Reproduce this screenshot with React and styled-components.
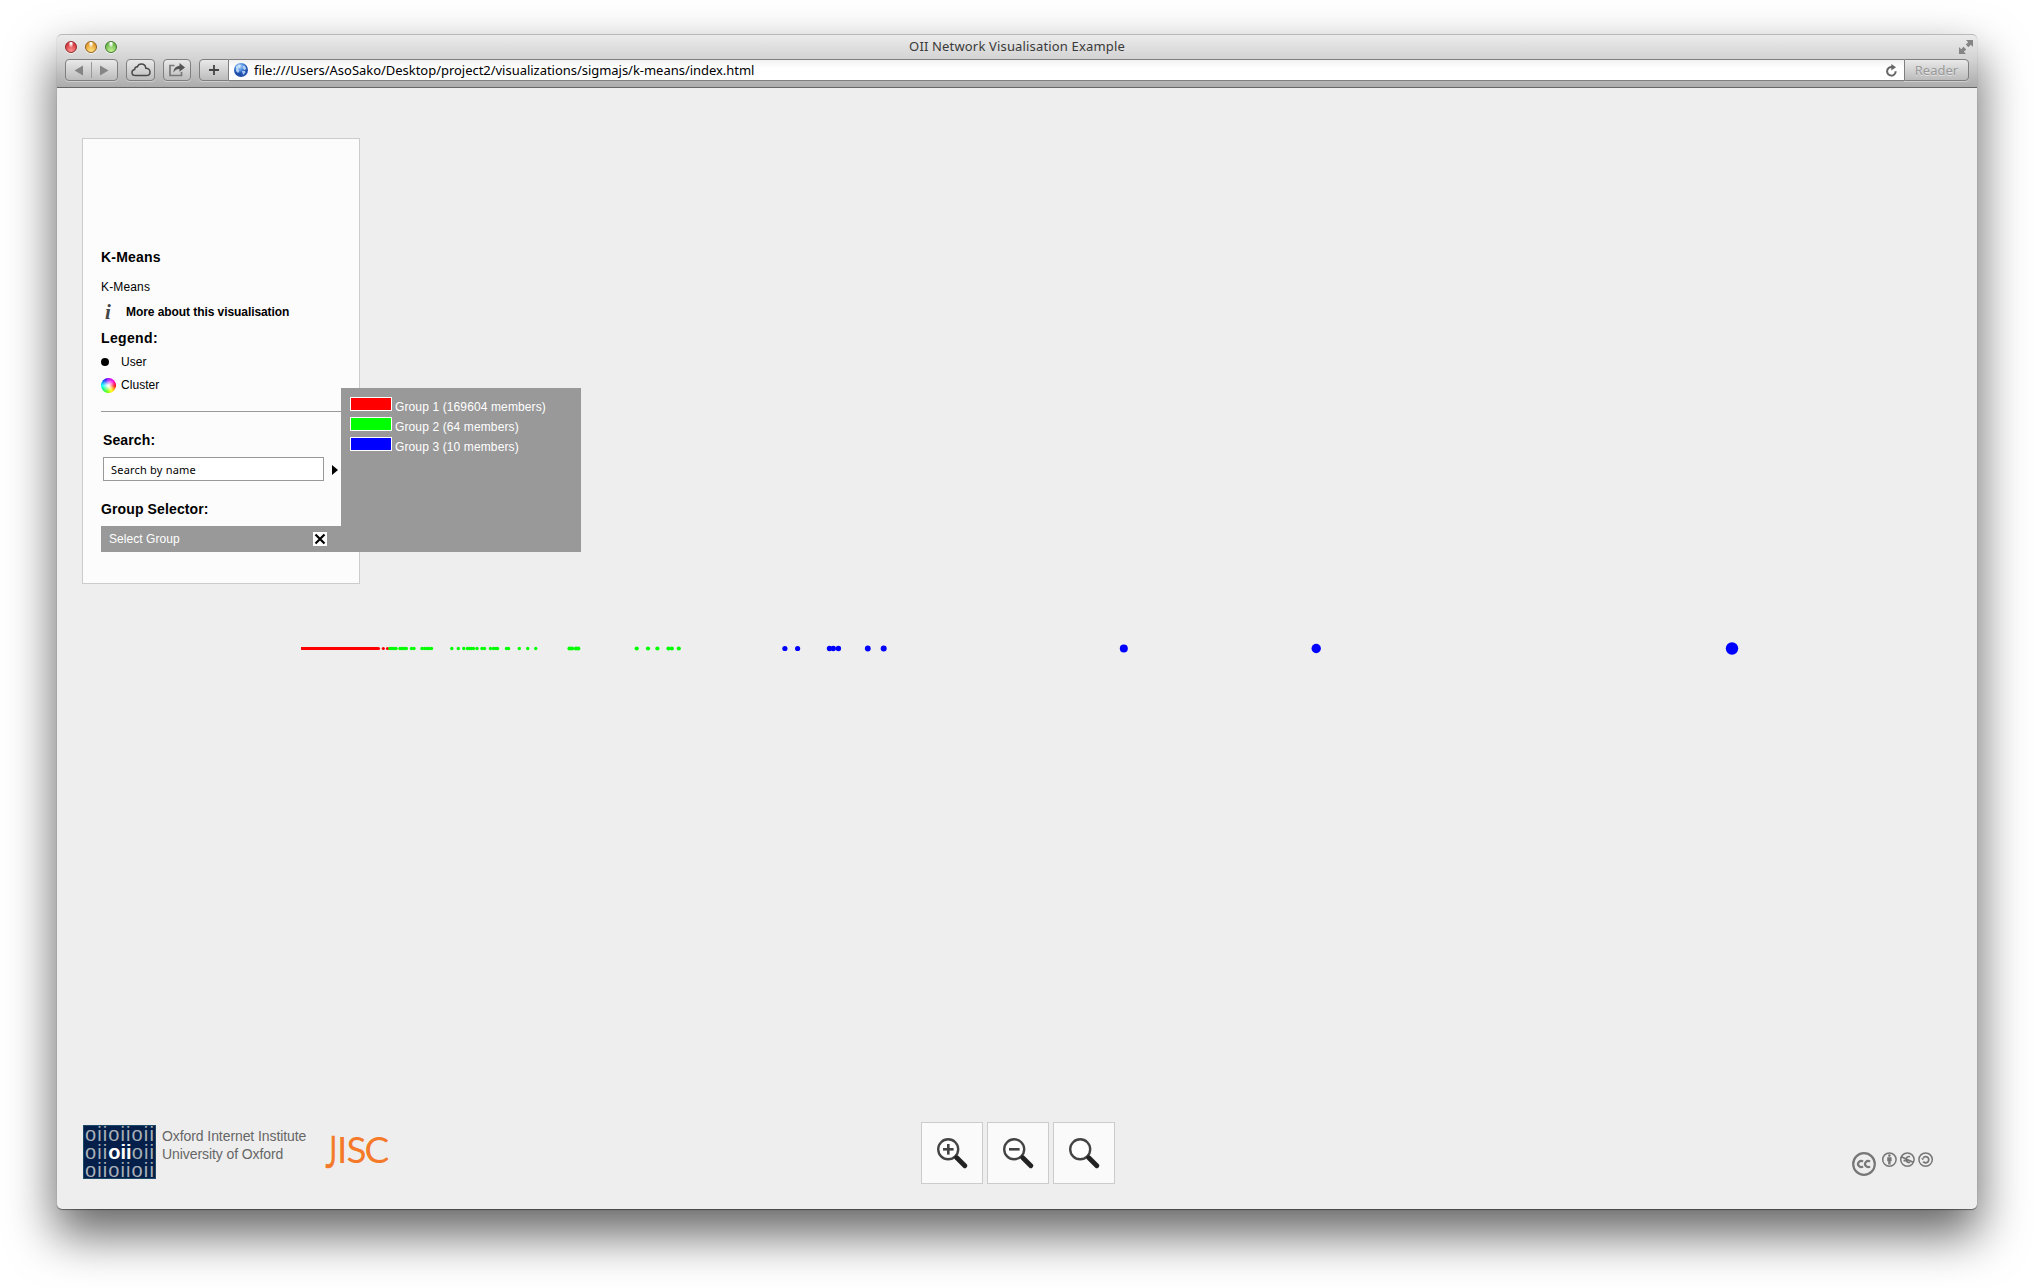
import React from "react";
import styled, { createGlobalStyle, css } from "styled-components";

const Global = createGlobalStyle`
  * { box-sizing: border-box; }
  body { margin: 0; background: #fff; overflow: hidden; }
`;
const sans = `"Liberation Sans", Arial, sans-serif`;
const humanist = `"Noto Sans", "Open Sans", sans-serif`;

const Desktop = styled.div`
  width: 2034px;
  height: 1288px;
  padding: 34px 57px 79px;
  overflow: hidden;
  background: #fff;
`;
const Window = styled.div`
  height: 1175px;
  display: flex;
  flex-direction: column;
  border-radius: 5px;
  background: #eee;
  box-shadow: 0 1px 1px 0 rgba(0, 0, 0, 0.45), 0 24px 48px 2px rgba(0, 0, 0, 0.6);
`;
const Chrome = styled.header`
  height: 54px;
  flex: none;
  display: flex;
  flex-direction: column;
  padding: 0 8px;
  border-radius: 5px 5px 0 0;
  border-top: 1px solid #b8b8b8;
  border-bottom: 1px solid #666;
  background: linear-gradient(#ebebeb, #d2d2d2 48%, #acacac);
`;
const TitleBar = styled.div`
  height: 24px;
  display: grid;
  grid-template-columns: 1fr auto 1fr;
  align-items: center;
  padding-bottom: 1px;
`;
const Lights = styled.div`
  display: flex;
  gap: 8px;
`;
const Light = styled.span`
  width: 12px;
  height: 12px;
  border-radius: 50%;
  border: 1px solid ${(p) => p.$edge};
  background: radial-gradient(ellipse at 50% 12%, #fff 0 8%, transparent 38%),
    radial-gradient(circle at 50% 95%, ${(p) => p.$glow}, ${(p) => p.$color} 75%);
  box-shadow: 0 1px 0 rgba(255, 255, 255, 0.6);
`;
const Title = styled.div`
  font: 13px/22px ${humanist};
  letter-spacing: 0.16px;
  padding-bottom: 1px;
  color: #3a3a3a;
  white-space: nowrap;
`;
const Expand = styled.svg`
  justify-self: end;
  width: 14px;
  height: 14px;
  margin-right: -4px;
`;
const Toolbar = styled.div`
  display: flex;
  height: 22px;
`;
const buttonFace = css`
  border: 1px solid #7f7f7f;
  background: linear-gradient(#e9e9e9, #bcbcbc);
  box-shadow: 0 1px 0 rgba(255, 255, 255, 0.35);
`;
const ToolButton = styled.button`
  ${buttonFace}
  width: ${(p) => p.$w}px;
  height: 22px;
  margin: 0 ${(p) => p.$gap || 0}px 0 0;
  padding: 0;
  display: flex;
  align-items: center;
  justify-content: center;
  border-radius: ${(p) => p.$radius || "4px"};
  font: 13px ${humanist};
  letter-spacing: 0px;
  color: #999;
  text-shadow: 0 1px 0 rgba(255, 255, 255, 0.5);
`;
const Address = styled.div`
  flex: 1;
  height: 22px;
  display: flex;
  align-items: center;
  padding: 0 7px 0 5px;
  border: solid #7f7f7f;
  border-width: 1px 0;
  background: linear-gradient(#f1f1f1, #fff 40%);
`;
const Url = styled.span`
  flex: 1;
  padding-left: 6px;
  font: 13px/20px ${humanist};
  letter-spacing: -0.03px;
  color: #000;
`;

const Stage = styled.main`
  position: relative;
  flex: 1;
  display: flex;
  flex-direction: column;
  justify-content: space-between;
  padding: 50px 43px 25px 25px;
`;
const Plot = styled.svg`
  position: absolute;
  left: 0;
  top: 0;
  width: 1920px;
  height: 1121px;
`;
const Panel = styled.section`
  position: relative;
  width: 278px;
  height: 446px;
  padding: 108px 18px 0;
  border: 1px solid #ccc;
  background: #fcfcfc;
  font-family: ${sans};
  color: #000;
`;
const Heading = styled.h2`
  margin: ${(p) => p.$mt || 0}px 0 0;
  padding: 0 0 0 ${(p) => p.$indent || 0}px;
  height: ${(p) => p.$h}px;
  font: bold 14px/20px ${sans};
  letter-spacing: ${(p) => p.$ls || 0.2}px;
`;
const Row = styled.div`
  display: flex;
  align-items: center;
  height: ${(p) => p.$h}px;
  font-size: 12px;
  font-weight: ${(p) => (p.$bold ? "bold" : "normal")};
  letter-spacing: ${(p) => p.$ls || 0.05}px;
`;
const IconSlot = styled.span`
  width: ${(p) => p.$w}px;
  display: flex;
`;
const InfoGlyph = styled.span`
  padding-left: 4px;
  font: italic bold 21px/20px "Liberation Serif", serif;
  color: #444;
`;
const UserDot = styled.span`
  width: 8px;
  height: 8px;
  border-radius: 50%;
  background: #000;
`;
const ClusterDot = styled.span`
  width: 15px;
  height: 15px;
  border-radius: 50%;
  background: radial-gradient(circle, #fff 5%, rgba(255, 255, 255, 0) 65%),
    conic-gradient(#a0f, #f0c 50deg, #f00 95deg, #fa0 125deg, #ff0 155deg, #5f0 195deg, #0f8 235deg, #0ff 270deg, #06f 310deg, #30f 335deg, #a0f);
`;
const Rule = styled.hr`
  width: 240px;
  height: 1px;
  margin: 0;
  border: 0;
  background: #999;
`;
const SearchRow = styled.div`
  display: flex;
  align-items: center;
  height: 24px;
  padding-left: 2px;
`;
const SearchField = styled.div`
  width: 221px;
  height: 24px;
  padding-left: 7px;
  border: 1px solid #999;
  background: #fff;
  font: 11px/23px ${humanist};
  letter-spacing: 0.2px;
`;
const Arrow = styled.span`
  margin: 2px 0 0 8px;
  border-left: 6px solid #000;
  border-top: 5.5px solid transparent;
  border-bottom: 5.5px solid transparent;
`;
const SelectBar = styled.div`
  width: 240px;
  height: 26px;
  display: flex;
  align-items: center;
  justify-content: space-between;
  padding: 0 14px 0 8px;
  background: #999;
  color: #fff;
  font-size: 12px;
  letter-spacing: 0.05px;
`;
const Close = styled.svg`
  width: 14px;
  height: 14px;
  background: #fff;
`;
const GroupMenu = styled.ul`
  position: absolute;
  left: 258px;
  top: 249px;
  width: 240px;
  height: 164px;
  margin: 0;
  padding: 9px;
  list-style: none;
  background: #999;
`;
const GroupItem = styled.li`
  display: flex;
  height: 20px;
  gap: 3px;
  color: #fff;
  font: 12px/21px ${sans};
  letter-spacing: 0.12px;
`;
const Swatch = styled.span`
  width: 42px;
  height: 14px;
  border: 1px solid #fff;
  background: ${(p) => p.$color};
`;

const Footer = styled.footer`
  position: relative;
  display: grid;
  grid-template-columns: 839px 1fr auto;
  height: 62px;
`;
const Logos = styled.div`
  display: flex;
  padding: 3px 0 0 1px;
`;
const OiiMark = styled.div`
  width: 73px;
  height: 54px;
  box-shadow: inset 0 0 0 1px #1c4a66;
  background: #04204a;
  font: 20px/18px ${sans};
  letter-spacing: 1.1px;
  color: #aab0b8;
  padding-left: 2px;
  b { color: #fff; font-weight: bold; letter-spacing: 0; }
`;
const MarkLine = styled.div`
  height: 18px;
  white-space: nowrap;
`;
const Institute = styled.div`
  width: 164px;
  padding: 2px 0 0 6px;
  font: 14px/18px ${sans};
  letter-spacing: -0.08px;
  color: #666;
`;
const Jisc = styled.svg`
  width: 70px;
  height: 50px;
`;
const ZoomTools = styled.div`
  display: flex;
  gap: 4px;
`;
const ZoomButton = styled.button`
  width: 62px;
  height: 62px;
  padding: 0;
  display: flex;
  align-items: center;
  justify-content: center;
  border: 1px solid #ccc;
  background: #fafafa;
`;
const License = styled.svg`
  width: 84px;
  height: 30px;
  margin-top: 30px;
`;

const range = (from, to, step) => {
  const out = [];
  for (let x = from; x <= to; x += step) out.push(x);
  return out;
};
const GREEN = [
  ...range(390, 396, 2), ...range(400, 406.5, 2.1), 411.5, 414, 422, 424.5, 427, 429, 431.5, 451.8, 458.3,
  463.8, 467.5, 469.5, 471.5, 473.5, 477, 482, 484.5, 490.5, 493.5, 496, 497.5, 506.5, 508.5, 519.3, 527.7, 535.7,
];
const GREEN_LARGE = [569.5, 572, 576, 578.3, 636.7, 648, 657.4, 668.5, 671.8, 678.8];
const BLUE = [
  [784.9, 2.6], [797.6, 2.6], [829.5, 2.7], [833.3, 2.7], [838.4, 2.7], [867.8, 2.9], [883.7, 3],
  [1123.8, 4], [1316.2, 4.7], [1732, 6.2],
];
const GROUPS = [
  ["#f00", "Group 1 (169604 members)"],
  ["#0f0", "Group 2 (64 members)"],
  ["#00f", "Group 3 (10 members)"],
];

function Points() {
  return (
    <Plot viewBox="57 88 1920 1121">
      <rect x="301" y="647" width="77" height="3" fill="#f00" />
      {[378.5, 383.3, 387.5].map((x) => <circle key={x} cx={x} cy="648.5" r="1.6" fill="#f00" />)}
      {GREEN.map((x) => <circle key={x} cx={x} cy="648.5" r="1.7" fill="#0f0" />)}
      {GREEN_LARGE.map((x) => <circle key={x} cx={x} cy="648.5" r="2.1" fill="#0f0" />)}
      {BLUE.map(([x, r]) => <circle key={x} cx={x} cy="648.5" r={r} fill="#00f" />)}
    </Plot>
  );
}

function Magnifier({ sign }) {
  return (
    <svg width="32" height="32" viewBox="0 0 32 32">
      <circle cx="12.2" cy="12.3" r="10" fill="#fff" stroke="#444" strokeWidth="2.4" />
      <path d="M19.3 19.2l2.2 2.2" stroke="#333" strokeWidth="3" />
      <path d="M20.8 20.8l8 8" stroke="#222" strokeWidth="4.8" strokeLinecap="round" />
      {sign && <path d="M7 12.3h10.6" stroke="#444" strokeWidth="2.6" />}
      {sign === "plus" && <path d="M12.3 7v10.6" stroke="#444" strokeWidth="2.6" />}
    </svg>
  );
}

function BrowserChrome() {
  return (
    <Chrome>
      <TitleBar>
        <Lights>
          <Light $edge="#8f2a2c" $color="#d8343a" $glow="#ff9a96" />
          <Light $edge="#95601c" $color="#e39a2c" $glow="#ffe888" />
          <Light $edge="#417a2c" $color="#6cb84a" $glow="#c8f79c" />
        </Lights>
        <Title>OII Network Visualisation Example</Title>
        <Expand viewBox="0 0 14 14">
          <path d="M7 0h7v7l-2.2-2.2L9.400 7.200 6.800 4.600 9.200 2.200zM0 7l2.200 2.200L4.600 6.800 7.200 9.400 4.800 11.800 7 14H0z" fill="#858585" />
        </Expand>
      </TitleBar>
      <Toolbar>
        <ToolButton $w={53} $gap={8}>
          <svg width="51" height="20" viewBox="0 0 51 20">
            <path d="M17 5.500v10L8.500 10.500zM34 5.500v10l8.500-5z" fill="#858585" />
            <path d="M25.500 2v16" stroke="#999" />
          </svg>
        </ToolButton>
        <ToolButton $w={29} $gap={8}>
          <svg width="20" height="14" viewBox="0 0 20 14">
            <path d="M4.500 12.500C2.300 12.500 1 11.200 1 9.400c0-1.700 1.200-2.800 2.700-3C3.800 4.600 4.900 3.700 6.300 3.900 7 2.100 8.400 1 10.300 1c2.500 0 4.300 1.800 4.500 4.300 2.500-.1 4.200 1.500 4.200 3.600 0 2.200-1.500 3.600-3.700 3.600z" fill="none" stroke="#4a4a4a" strokeWidth="1.500" />
          </svg>
        </ToolButton>
        <ToolButton $w={28} $gap={8}>
          <svg width="18" height="14" viewBox="0 0 18 14">
            <path d="M6.500 2.500H2v10h11.500V9" fill="none" stroke="#777" strokeWidth="1.700" />
            <path d="M11.500 0l5.500 4.400-5.500 4.400V6C8.800 6 6.900 7 5.500 9.500 5.700 5.500 7.800 3 11.500 2.700z" fill="#555" />
          </svg>
        </ToolButton>
        <ToolButton $w={30} $radius="4px 0 0 4px">
          <svg width="10" height="10" viewBox="0 0 10 10">
            <path d="M5 0v10M0 5h10" stroke="#444" strokeWidth="1.800" />
          </svg>
        </ToolButton>
        <Address>
          <svg width="14" height="14" viewBox="0 0 14 14">
            <defs>
              <radialGradient id="globe" cx=".4" cy=".25">
                <stop offset="0" stopColor="#b8d8fa" />
                <stop offset=".6" stopColor="#4a88dc" />
                <stop offset="1" stopColor="#2050ac" />
              </radialGradient>
            </defs>
            <circle cx="7" cy="7" r="7" fill="url(#globe)" />
            <path d="M2 3.500l3-2 2 .7-1 2-2 1.500 1.500 2L4 10 2 8zM8.500 2.500l2.500.5 1.500 3-2 1-1.500-1.500zM8 8l3-.3.500 1.800L9 12z" fill="#d6ecff" opacity=".75" />
          </svg>
          <Url>file:///Users/AsoSako/Desktop/project2/visualizations/sigmajs/k-means/index.html</Url>
          <svg width="11" height="13" viewBox="0 0 11 13">
            <path d="M9.700 7.200A4.300 4.300 0 1 1 6.200 3.100" fill="none" stroke="#666" strokeWidth="2" />
            <path d="M5.300 0l4.700 3.300-4.700 3.100z" fill="#666" />
          </svg>
        </Address>
        <ToolButton $w={65} $radius="0 4px 4px 0">Reader</ToolButton>
      </Toolbar>
    </Chrome>
  );
}

function InfoPanel() {
  return (
    <Panel>
      <Heading $h={30}>K-Means</Heading>
      <Row $h={20} $ls={0.15}>K-Means</Row>
      <Row $h={29} $bold $ls={-0.07}>
        <IconSlot $w={25}><InfoGlyph>i</InfoGlyph></IconSlot>
        More about this visualisation
      </Row>
      <Heading $h={24} $mt={2} $ls={0.35}>Legend:</Heading>
      <Row $h={20}><IconSlot $w={20}><UserDot /></IconSlot>User</Row>
      <Row $h={26}><IconSlot $w={20}><ClusterDot /></IconSlot>Cluster</Row>
      <Row $h={13} />
      <Rule />
      <Row $h={18} />
      <Heading $h={27} $indent={2} $ls={0.12}>Search:</Heading>
      <SearchRow><SearchField>Search by name</SearchField><Arrow /></SearchRow>
      <Row $h={18} />
      <Heading $h={27} $ls={0.12}>Group Selector:</Heading>
      <SelectBar>
        Select Group
        <Close viewBox="0 0 14 14">
          <path d="M2.500 2.500l9 9M11.500 2.500l-9 9" stroke="#000" strokeWidth="2.200" />
        </Close>
      </SelectBar>
      <GroupMenu>
        {GROUPS.map(([color, label]) => (
          <GroupItem key={label}><Swatch $color={color} />{label}</GroupItem>
        ))}
      </GroupMenu>
    </Panel>
  );
}

function PageFooter() {
  return (
    <Footer>
      <Logos>
        <OiiMark>
          <MarkLine>oiioiioii</MarkLine>
          <MarkLine>oii<b>oii</b>oii</MarkLine>
          <MarkLine>oiioiioii</MarkLine>
        </OiiMark>
        <Institute>Oxford Internet Institute<br />University of Oxford</Institute>
        <Jisc viewBox="0 0 70 50" fill="#f47a2a" fontFamily="Lato, sans-serif" fontSize="37">
          <text transform="translate(5.500 43) scale(.6 1)" fontSize="45" stroke="#f47a2a" strokeWidth=".6">J</text>
          <text x="17 26.500 44.500" y="38">ISC</text>
        </Jisc>
      </Logos>
      <ZoomTools>
        <ZoomButton aria-label="Zoom in"><Magnifier sign="plus" /></ZoomButton>
        <ZoomButton aria-label="Zoom out"><Magnifier sign="minus" /></ZoomButton>
        <ZoomButton aria-label="Reset zoom"><Magnifier /></ZoomButton>
      </ZoomTools>
      <License viewBox="1850 1152 84 30" fill="none" stroke="#777">
        <circle cx="1864" cy="1164" r="10.800" strokeWidth="2.200" />
        <path d="M1863 1161.700a3 3 0 1 0 0 4.600M1870 1161.700a3 3 0 1 0 0 4.600" strokeWidth="2.200" />
        <circle cx="1889.400" cy="1159.600" r="6.700" strokeWidth="1.500" />
        <circle cx="1889.400" cy="1155.600" r="1.300" fill="#777" stroke="none" />
        <path d="M1887.200 1157.300h4.400v4h-1v3.300h-2.400v-3.300h-1z" fill="#777" stroke="none" />
        <circle cx="1907.400" cy="1159.600" r="6.700" strokeWidth="1.500" />
        <path d="M1910 1156.700a3 3 0 1 0 .2 5.500M1903.500 1160.600h5M1901.200 1156.800l12 5.400" strokeWidth="1.600" />
        <circle cx="1925.600" cy="1159.600" r="6.700" strokeWidth="1.500" />
        <path d="M1923.200 1157.800a3.100 3.100 0 1 1 0 3.800" strokeWidth="1.800" />
        <path d="M1921 1158.300h3.400l-1.700 2z" fill="#777" stroke="none" />
      </License>
    </Footer>
  );
}

export default function App() {
  return (
    <>
      <Global />
      <Desktop>
        <Window>
          <BrowserChrome />
          <Stage>
            <Points />
            <InfoPanel />
            <PageFooter />
          </Stage>
        </Window>
      </Desktop>
    </>
  );
}
